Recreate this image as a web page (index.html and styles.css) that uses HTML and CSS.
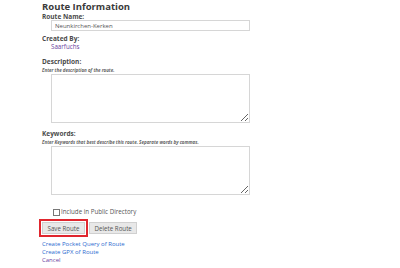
FILE: index.html
```html
<!DOCTYPE html>
<html lang="en">
<head>
    <meta charset="UTF-8">
    <title>Route Information</title>
    <link rel="stylesheet" href="styles.css">
</head>
<body>
    <div class="route-form">
        <h2 class="title">Route Information</h2>

        <div class="label">Route Name:</div>
        <div class="field">
            <input class="text-input" type="text" value="Neunkirchen-Kerken">
        </div>

        <div class="label created">Created By:</div>
        <div class="field">
            <a class="visited" href="#">Saarfuchs</a>
        </div>

        <div class="label section">Description:</div>
        <div class="hint">Enter the description of the route.</div>
        <div class="field">
            <textarea class="text-area"></textarea>
        </div>

        <div class="label section">Keywords:</div>
        <div class="hint">Enter Keywords that best describe this route. Separate words by commas.</div>
        <div class="field">
            <textarea class="text-area"></textarea>
        </div>

        <div class="field check-row">
            <span class="check-box"></span>
            <span>Include in Public Directory</span>
        </div>

        <div class="buttons">
            <button class="btn btn-save">Save Route</button>
            <button class="btn">Delete Route</button>
        </div>

        <ul class="links">
            <li><a href="#">Create Pocket Query of Route</a></li>
            <li><a href="#">Create GPX of Route</a></li>
            <li><a class="visited" href="#">Cancel</a></li>
        </ul>
    </div>
</body>
</html>
```

FILE: styles.css
```css
body {
    margin: 0;
    background: #fff;
    font-family: "Open Sans", "Liberation Sans", sans-serif;
    color: #444;
}
.route-form {
    padding: 1px 0 0 42px;
    width: 208px;
}
.title {
    margin: 0;
    font-size: 9.5px;
    line-height: 12px;
    font-weight: 700;
    color: #3a3a3a;
}
.label {
    font-size: 6.5px;
    line-height: 7px;
    font-weight: 700;
    color: #4a4a4a;
}
.created {
    margin-top: 4px;
    line-height: 8px;
}
.section {
    margin-top: 7px;
    line-height: 8px;
}
.field {
    margin-left: 9px;
    font-size: 6.2px;
    line-height: 8px;
}
.text-input {
    display: block;
    box-sizing: border-box;
    width: 199px;
    height: 11px;
    margin: 0;
    padding: 0 3px;
    border: 1px solid #d6d6d6;
    font-family: inherit;
    font-size: 6px;
    color: #555;
}
.hint {
    font-size: 4.5px;
    line-height: 8px;
    font-style: italic;
    font-weight: 700;
    color: #666;
}
.text-area {
    display: block;
    box-sizing: border-box;
    width: 199px;
    height: 49px;
    margin: 0;
    border: 1px solid #d6d6d6;
    resize: vertical;
}
.check-row {
    margin-top: 13px;
    display: flex;
    align-items: center;
    gap: 1px;
    color: #555;
}
.check-box {
    width: 5px;
    height: 5px;
    margin-left: 2px;
    border: 1px solid #777;
    background: #fff;
}
.buttons {
    margin-top: 6px;
    display: flex;
    gap: 4px;
}
.btn {
    height: 12px;
    margin: 0;
    padding: 0 4.5px;
    border: 1px solid #d0d0d0;
    background: #e8e8e8;
    font-family: inherit;
    font-size: 6.2px;
    color: #555;
}
.btn-save {
    outline: 2px solid #e0262e;
    outline-offset: 1px;
}
.links {
    margin: 6px 0 0;
    padding: 0;
    list-style: none;
    font-size: 6px;
    line-height: 8px;
}
.links a {
    color: #2d6bd0;
    text-decoration: none;
}
a.visited,
.links a.visited {
    color: #6b3fa0;
    text-decoration: none;
}
```
